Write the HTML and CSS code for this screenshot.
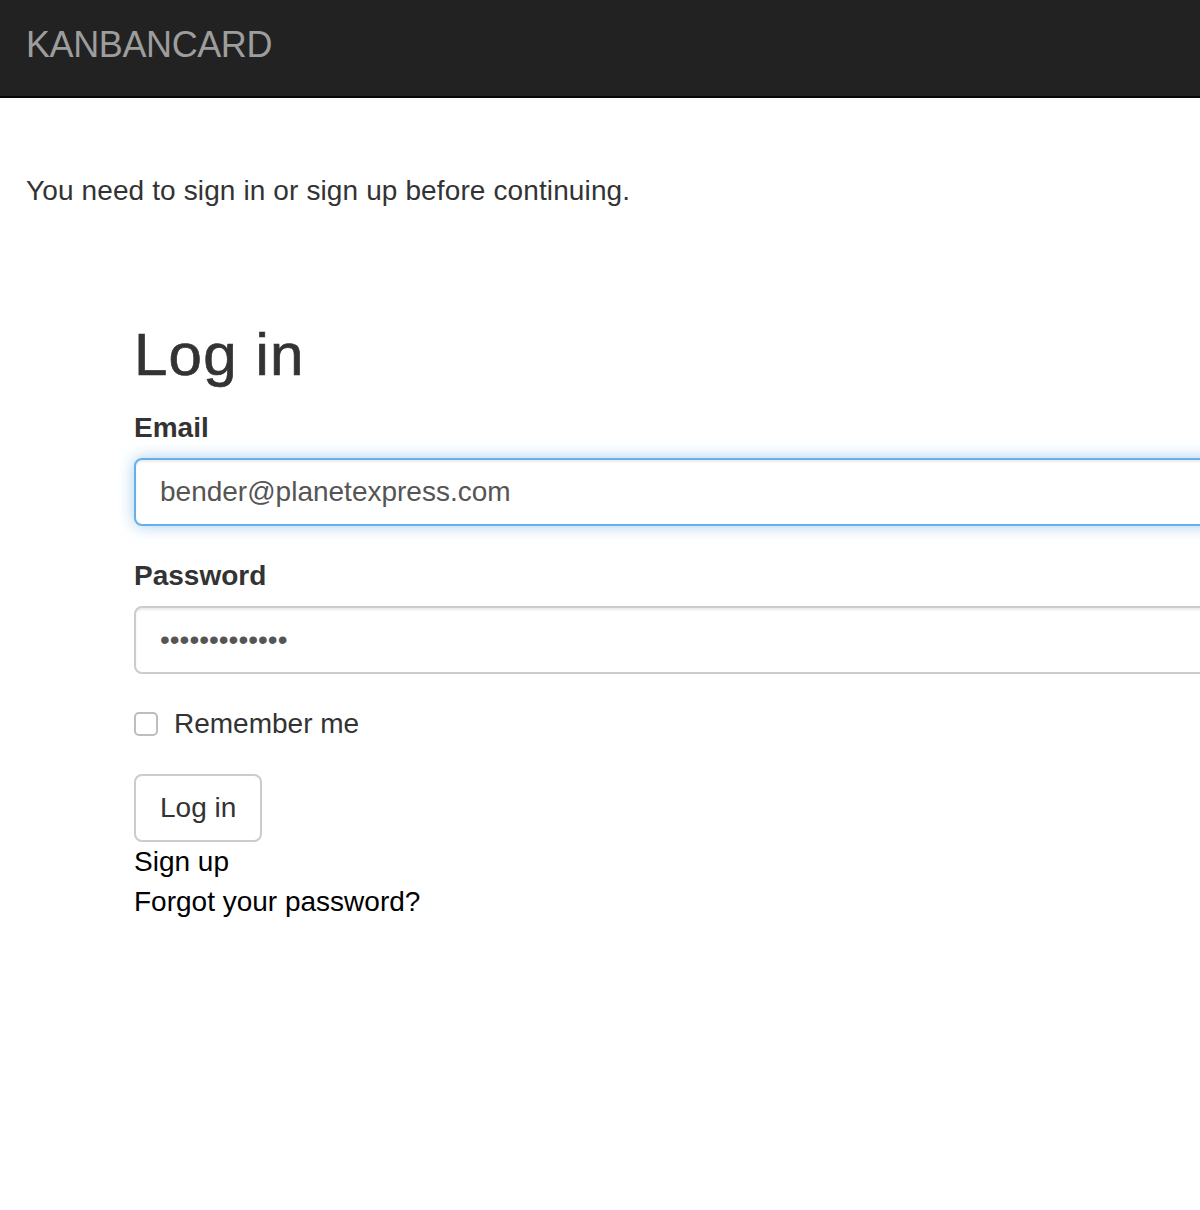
FILE: index.html
```html
<!DOCTYPE html>
<html lang="en">
<head>
<meta charset="utf-8">
<title>Kanbancard - Log in</title>
<link rel="stylesheet" href="styles.css">
</head>
<body>
<nav class="navbar">
  <a class="brand" href="#">KANBANCARD</a>
</nav>
<main class="main">
  <p class="flash">You need to sign in or sign up before continuing.</p>
  <section class="login">
    <h2 class="title">Log in</h2>
    <form class="form">
      <div class="group">
        <label class="label" for="email">Email</label>
        <input class="input input-focus" id="email" type="email" value="bender@planetexpress.com">
      </div>
      <div class="group">
        <label class="label" for="password">Password</label>
        <input class="input" id="password" type="password" value="bendingrodrig">
      </div>
      <div class="check-row">
        <input class="check" id="remember" type="checkbox">
        <label class="check-label" for="remember">Remember me</label>
      </div>
      <button class="btn" type="button">Log in</button>
    </form>
    <div class="links">
      <a class="link" href="#">Sign up</a>
      <a class="link" href="#">Forgot your password?</a>
    </div>
  </section>
</main>
</body>
</html>
```

FILE: styles.css
```css
html, body {
  margin: 0;
  padding: 0;
  background: #fff;
  overflow: hidden;
}
body {
  font-family: "Liberation Sans", Arial, Helvetica, sans-serif;
  color: #333;
  font-size: 28px;
  line-height: 40px;
}
.navbar {
  height: 96px;
  background: #222;
  border-bottom: 2px solid #080808;
}
.brand {
  display: block;
  padding-left: 26px;
  font-size: 36px;
  line-height: 90px;
  color: #9d9d9d;
  text-decoration: none;
  letter-spacing: -0.4px;
}
.main {
  padding: 0 0 0 26px;
}
.flash {
  margin: 73px 0 0 0;
  letter-spacing: 0.12px;
}
.login {
  margin: 111px 0 0 108px;
  width: 1300px;
}
.title {
  margin: 0 0 20px 0;
  font-size: 60px;
  line-height: 66px;
  font-weight: 400;
  color: #333;
  letter-spacing: 1.2px;
  -webkit-text-stroke: 0.7px #333;
}
.form {
  display: flex;
  flex-direction: column;
}
.group {
  display: flex;
  flex-direction: column;
  margin-bottom: 30px;
}
.label {
  font-weight: bold;
  margin-bottom: 10px;
}
.input {
  box-sizing: border-box;
  height: 68px;
  width: 100%;
  padding: 12px 24px;
  font-family: inherit;
  font-size: 28px;
  line-height: 40px;
  color: #555;
  background: #fff;
  border: 2px solid #ccc;
  border-radius: 8px;
  box-shadow: inset 0 2px 2px rgba(0,0,0,0.075);
  outline: none;
}
.input-focus {
  border-color: #66afe9;
  box-shadow: inset 0 2px 2px rgba(0,0,0,0.075), 0 0 16px rgba(102,175,233,0.6);
}
.check-row {
  display: flex;
  align-items: center;
  height: 40px;
}
.check {
  appearance: none;
  -webkit-appearance: none;
  box-sizing: border-box;
  width: 24px;
  height: 24px;
  margin: 0 16px 0 0;
  border: 2px solid #bdbdbd;
  border-radius: 5px;
  background: #fff;
}
.check-label {
  color: #333;
}
.btn {
  align-self: flex-start;
  margin-top: 30px;
  box-sizing: border-box;
  height: 68px;
  padding: 12px 24px;
  font-family: inherit;
  font-size: 28px;
  line-height: 40px;
  color: #333;
  background: #fff;
  border: 2px solid #ccc;
  border-radius: 8px;
}
.links {
  display: flex;
  flex-direction: column;
}
.link {
  color: #000;
  text-decoration: none;
}
```
